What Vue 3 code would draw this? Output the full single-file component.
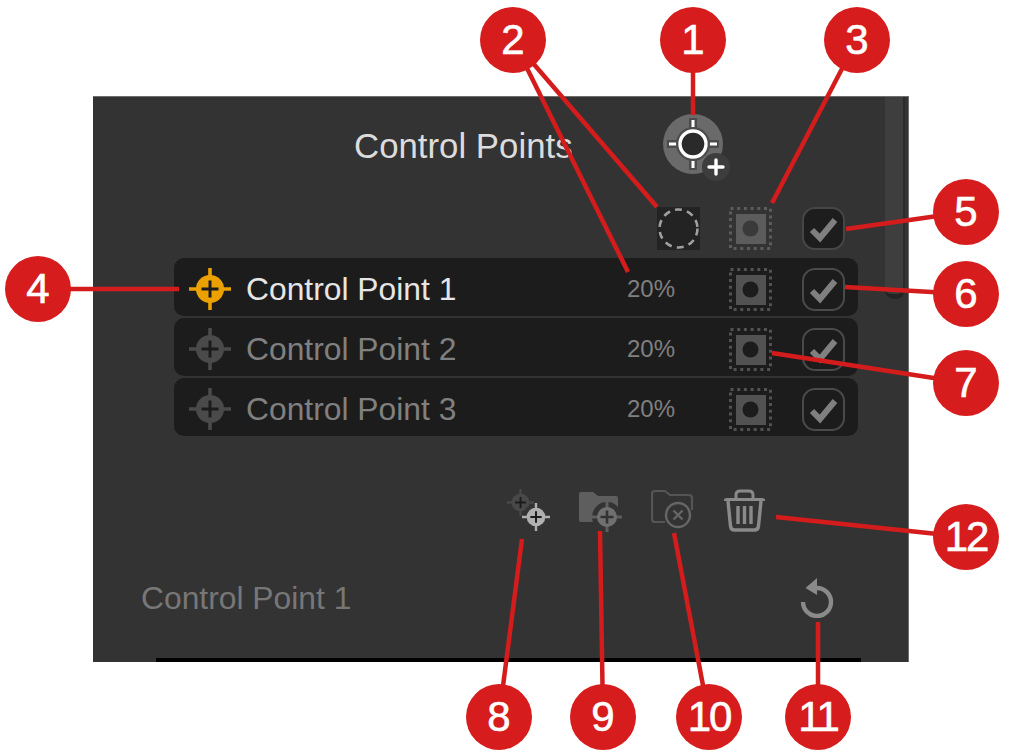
<template>
  <div class="page">
    <svg class="defs" width="0" height="0">
      <symbol id="cross" viewBox="0 0 42 42">
        <path d="M21 0v42M0 21h42" stroke="currentColor" stroke-width="3.6" />
        <circle cx="21" cy="21" r="14" fill="currentColor" />
        <path d="M21 12.5v17M12.5 21h17" stroke="#1c1c1c" stroke-width="3" />
      </symbol>
      <symbol id="mask" viewBox="0 0 43 43">
        <rect x="1.5" y="1.5" width="40" height="40" fill="none" stroke="currentColor" stroke-width="3" stroke-dasharray="3 3.7" />
        <rect x="7" y="7" width="30" height="30" fill="currentColor" />
      </symbol>
    </svg>

    <div class="panel">
      <div class="panel_head">
        <div class="panel_title">Control Points</div>
        <svg class="add_point" width="70" height="70" viewBox="0 0 70 70">
          <circle cx="30" cy="30" r="30" fill="#6a6a6a" />
          <path d="M30 4v52M4 30h52" stroke="#4c4c4c" stroke-width="8" />
          <path d="M30 6v8M30 46v8M6 30h8M46 30h8" stroke="#fff" stroke-width="3" />
          <circle cx="30" cy="30" r="17" fill="#4c4c4c" />
          <circle cx="30" cy="30" r="13" fill="#2a2a2a" stroke="#fff" stroke-width="3.4" />
          <circle cx="53" cy="53" r="14" fill="#3d3d3d" />
          <path d="M53 46v14M46 53h14" stroke="#fff" stroke-width="3.4" stroke-linecap="round" />
        </svg>
      </div>

      <div class="col_head">
        <svg class="col_opacity" width="43" height="43" viewBox="0 0 43 43">
          <rect width="43" height="43" fill="#232323" />
          <circle cx="21.5" cy="21.5" r="19" fill="none" stroke="#a0a0a0" stroke-width="2.6" stroke-dasharray="7 5.2" />
        </svg>
        <svg class="col_mask mask_head" width="43" height="43" viewBox="0 0 43 43">
          <use href="#mask" />
          <circle cx="21.5" cy="21.5" r="8" fill="#3a3a3a" />
        </svg>
        <svg class="col_check" width="43" height="43" viewBox="0 0 43 43">
          <rect x="1" y="1" width="41" height="41" rx="12" fill="#1d1d1d" stroke="#464646" stroke-width="2" />
          <path d="M10 23l8 8 15-18" fill="none" stroke="#808080" stroke-width="6" />
        </svg>
      </div>

      <div class="rows">
        <div v-for="row in rows" :key="row.name" class="row" :class="{ active: row.active }">
          <svg class="row_icon" width="42" height="42"><use href="#cross" /></svg>
          <span class="row_name">{{ row.name }}</span>
          <span class="row_pct">{{ row.pct }}</span>
          <svg class="col_mask mask_row" width="43" height="43" viewBox="0 0 43 43">
            <use href="#mask" />
            <circle cx="21.5" cy="21.5" r="8" fill="#1c1c1c" />
          </svg>
          <svg class="col_check" width="43" height="43" viewBox="0 0 43 43">
            <rect x="1" y="1" width="41" height="41" rx="12" fill="none" stroke="#4a4a4a" stroke-width="2" />
            <path d="M10 23l8 8 15-18" fill="none" stroke="#808080" stroke-width="6" />
          </svg>
        </div>
      </div>

      <div class="actions">
        <svg width="43" height="43" viewBox="0 0 43 43">
          <g color="#484848"><use href="#cross" x="0" y="0" width="27" height="27" /></g>
          <circle cx="29" cy="28" r="13" fill="#333" />
          <g color="#b0b0b0"><use href="#cross" x="15" y="14" width="28" height="28" /></g>
        </svg>
        <svg width="43" height="43" viewBox="0 0 43 43">
          <path d="M0 5q0-2 2-2h12l5 4h18q2 0 2 2v22q0 2-2 2H2q-2 0-2-2z" fill="#5e5e5e" />
          <circle cx="28" cy="28" r="15" fill="#333" />
          <path d="M28 13v30M13 28h30" stroke="#5e5e5e" stroke-width="3" />
          <circle cx="28" cy="28" r="10" fill="#707070" />
          <path d="M28 21.5v13M21.5 28h13" stroke="#333" stroke-width="2.6" />
        </svg>
        <svg width="43" height="43" viewBox="0 0 43 43">
          <path d="M14 33H4q-3 0-3-3V5q0-3 3-3h10l5 4h19q3 0 3 3v12" fill="none" stroke="#555" stroke-width="2.2" />
          <circle cx="27" cy="26" r="12" fill="#333" stroke="#666" stroke-width="2.4" />
          <path d="M22.5 21.5l9 9M31.5 21.5l-9 9" stroke="#666" stroke-width="2.4" />
        </svg>
        <svg width="43" height="43" viewBox="0 0 43 43">
          <path d="M13 9V6q0-4 4-4h9q4 0 4 4v3" fill="none" stroke="#8a8a8a" stroke-width="3" />
          <path d="M1 11q0-2 3-2h35q3 0 3 2v1H1z" fill="#8a8a8a" />
          <path d="M5 12l2.500 25q.4 4 4 4h20q3.600 0 4-4L38 12" fill="none" stroke="#8a8a8a" stroke-width="3.400" />
          <path d="M15 17v18M21.500 17v18M28 17v18" stroke="#8a8a8a" stroke-width="3.400" />
        </svg>
      </div>

      <div class="panel_foot">
        <span class="foot_name">Control Point 1</span>
        <svg class="reset" width="36" height="40" viewBox="0 0 36 40">
          <path d="M18 10A14 14 0 1 1 4 24" fill="none" stroke="#8a8a8a" stroke-width="4.400" />
          <path d="M18 0v17L6.500 10z" fill="#8a8a8a" />
        </svg>
      </div>
      <div class="panel_edge"></div>

      <div class="scroll"></div>
    </div>

    <svg class="leaders" width="1024" height="756" viewBox="0 0 1024 756">
      <line v-for="(l, i) in leaders" :key="i" :x1="l[0]" :y1="l[1]" :x2="l[2]" :y2="l[3]" />
    </svg>
    <div
      v-for="b in badges"
      :key="b.n"
      class="badge"
      :class="{ wide: b.n > 9 }"
      :style="{ left: b.x - 33 + 'px', top: b.y - 33 + 'px' }"
    >{{ b.n }}</div>
  </div>
</template>

<script setup>
const rows = [
  { name: 'Control Point 1', pct: '20%', active: true },
  { name: 'Control Point 2', pct: '20%', active: false },
  { name: 'Control Point 3', pct: '20%', active: false },
];

const badges = [
  { n: 1, x: 693, y: 40 },
  { n: 2, x: 513, y: 40 },
  { n: 3, x: 857, y: 40 },
  { n: 4, x: 38, y: 289 },
  { n: 5, x: 966, y: 212 },
  { n: 6, x: 966, y: 294 },
  { n: 7, x: 966, y: 383 },
  { n: 8, x: 499, y: 717 },
  { n: 9, x: 603, y: 717 },
  { n: 10, x: 709, y: 717 },
  { n: 11, x: 818, y: 717 },
  { n: 12, x: 966, y: 537 },
];

const leaders = [
  [693, 40, 693, 115],
  [513, 40, 657, 207],
  [513, 40, 628, 272],
  [857, 40, 772, 203],
  [38, 289, 179, 289],
  [966, 212, 846, 229],
  [966, 294, 845, 287],
  [966, 383, 772, 353],
  [499, 717, 522, 539],
  [603, 717, 600, 531],
  [709, 717, 674, 533],
  [818, 717, 818, 622],
  [966, 537, 776, 517],
];
</script>

<style>
body {
  background: #fff;
}
</style>

<style scoped>
.page {
  position: relative;
  width: 1024px;
  height: 756px;
  overflow: hidden;
  padding: 96px 0 0 93px;
  box-sizing: border-box;
  background: #fff;
  font-family: "Liberation Sans", Arial, sans-serif;
}

.defs {
  position: absolute;
}

svg {
  display: block;
  flex: none;
}

.panel {
  position: relative;
  display: flex;
  flex-direction: column;
  width: 816px;
  height: 566px;
  box-sizing: border-box;
  padding: 17px 50px 0 81px;
  background: #333;
  border-top: 1px solid #6e6e6e;
  border-right: 1px solid #6e6e6e;
}

.panel_head {
  display: flex;
  height: 70px;
  padding-left: 180px;
}

.panel_title {
  width: 309px;
  margin-top: 2px;
  font-size: 34.8px;
  line-height: 60px;
  color: #dcdcdc;
}

.col_head {
  display: flex;
  align-items: center;
  height: 43px;
  margin-top: 23px;
}

.col_opacity {
  margin-left: 483px;
}

.col_mask {
  margin-left: 29px;
}

.mask_head {
  color: #5c5c5c;
}

.mask_row {
  color: #525252;
}

.col_check {
  margin-left: 30px;
}

.rows {
  display: flex;
  flex-direction: column;
  gap: 2px;
  margin-top: 8px;
}

.row {
  display: flex;
  align-items: center;
  height: 58px;
  box-sizing: border-box;
  padding: 4px 0 0 15px;
  border-radius: 10px;
  background: #1c1c1c;
  color: #4a4a4a;
}

.row.active {
  color: #eba100;
}

.row_name {
  width: 381px;
  margin-left: 15px;
  font-size: 31.8px;
  color: #808080;
}

.row.active .row_name {
  color: #e6e6e6;
}

.row_pct {
  width: 73px;
  font-size: 24px;
  color: #808080;
}

.actions {
  display: flex;
  gap: 29px;
  margin-top: 53px;
  padding-left: 333px;
}

.panel_foot {
  display: flex;
  align-items: center;
  justify-content: space-between;
  margin: 46px 23px 0 -33px;
}

.foot_name {
  font-size: 31.8px;
  color: #777;
}

.panel_edge {
  position: absolute;
  left: 63px;
  bottom: 0;
  width: 705px;
  height: 4px;
  background: #000;
}

.scroll {
  position: absolute;
  top: 0;
  right: 3px;
  width: 20px;
  height: 202px;
  box-sizing: border-box;
  border-right: 2px solid #2b2b2b;
  border-bottom: 5px solid #242424;
  border-radius: 0 0 9px 9px;
  background: #3e3e3e;
}

.leaders {
  position: absolute;
  top: 0;
  left: 0;
}

.leaders line {
  stroke: #d41c1c;
  stroke-width: 4.5;
}

.badge {
  position: absolute;
  width: 66px;
  height: 66px;
  border-radius: 50%;
  background: #d61c1c;
  color: #fff;
  font-size: 42px;
  line-height: 66px;
  text-align: center;
  -webkit-text-stroke: 0.6px #fff;
}

.badge.wide {
  letter-spacing: -2px;
}
</style>
